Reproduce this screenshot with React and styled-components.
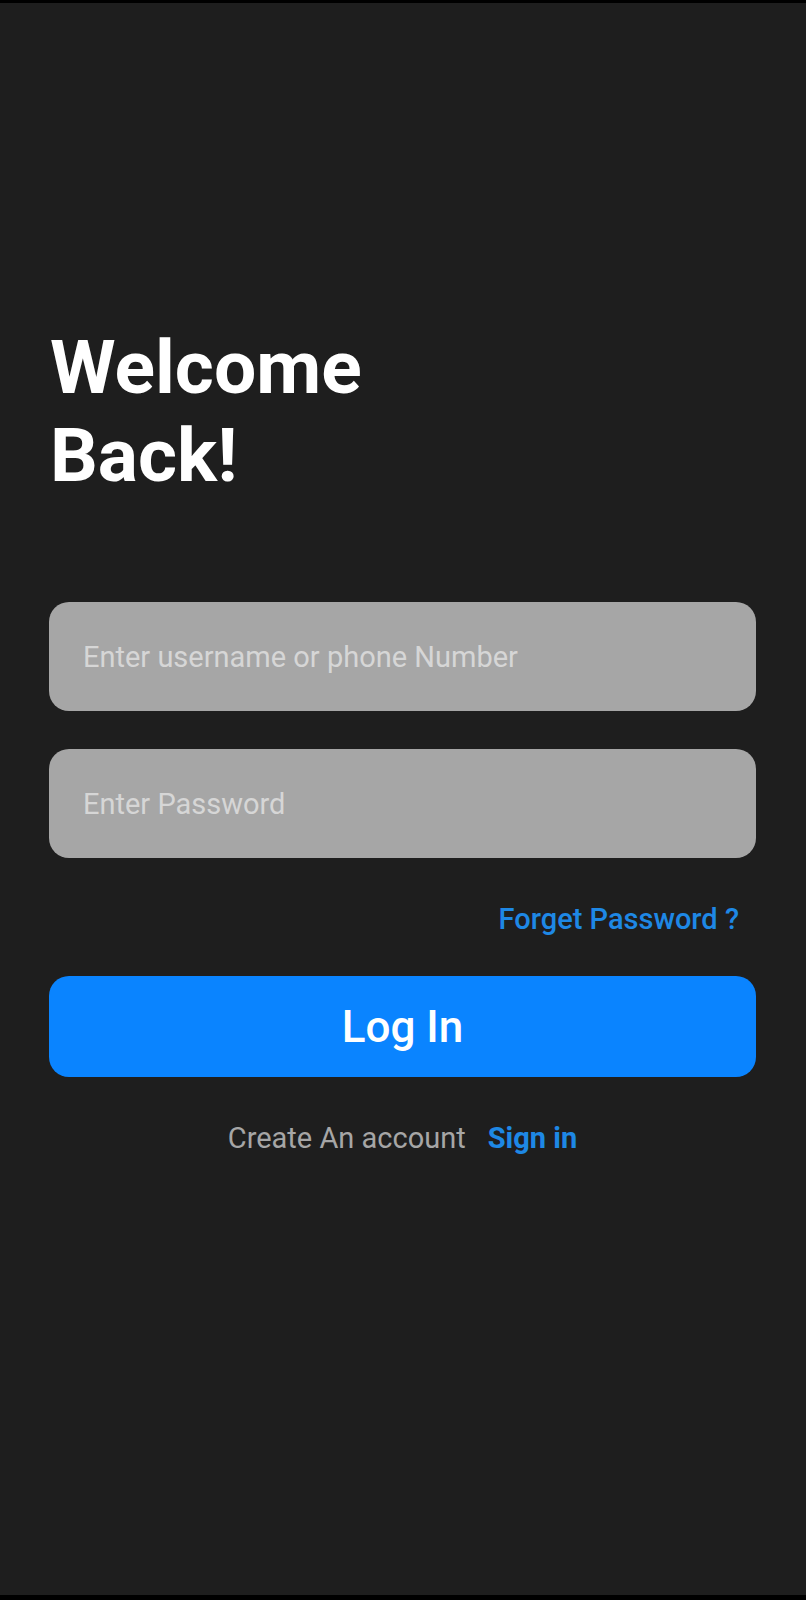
import React from "react";
import styled, { createGlobalStyle } from "styled-components";

const Global = createGlobalStyle`
  html, body { margin: 0; padding: 0; background: #000; }
  body { font-family: Roboto, "Noto Sans", sans-serif; }
  * { box-sizing: border-box; }
`;

const Screen = styled.div`
  margin-top: 3px;
  height: 1592px;
  background: #1e1e1e;
  padding: 320px 50px 0 49px;
  display: flex;
  flex-direction: column;
`;

const Title = styled.h1`
  margin: 0;
  padding-left: 1px;
  color: #ffffff;
  font-family: Roboto, sans-serif;
  font-weight: 700;
  font-size: 75px;
  line-height: 88px;
`;

const Form = styled.form`
  margin-top: 103px;
  display: flex;
  flex-direction: column;
  gap: 38px;
`;

const Field = styled.input`
  height: 109px;
  border: none;
  outline: none;
  border-radius: 20px;
  background: #a6a6a6;
  padding: 0 34px;
  font-family: Roboto, sans-serif;
  font-size: 29px;
  color: #ffffff;
  &::placeholder { color: #d6d6d6; }
`;

const Forgot = styled.a`
  align-self: flex-end;
  margin: 45px 17px 0 0;
  color: #1e88e5;
  font-family: Roboto, sans-serif;
  font-weight: 500;
  font-size: 29px;
  line-height: 33px;
  text-decoration: none;
`;

const LoginButton = styled.button`
  margin-top: 40px;
  height: 101px;
  border: none;
  border-radius: 20px;
  background: #0a84ff;
  color: #ffffff;
  font-family: Roboto, sans-serif;
  font-weight: 500;
  font-size: 44px;
`;

const Footer = styled.div`
  margin-top: 45px;
  display: flex;
  justify-content: center;
  gap: 22px;
  font-family: Roboto, sans-serif;
  font-size: 29px;
  line-height: 33px;
`;

const Muted = styled.span`
  color: #a6a6a6;
`;

const Link = styled.a`
  color: #1e88e5;
  font-weight: 700;
  text-decoration: none;
`;

export default function App() {
  return (
    <>
      <Global />
      <Screen>
        <Title>
          Welcome
          <br />
          Back!
        </Title>
        <Form onSubmit={(e) => e.preventDefault()}>
          <Field placeholder="Enter username or phone Number" />
          <Field type="password" placeholder="Enter Password" />
        </Form>
        <Forgot href="#">Forget Password ?</Forgot>
        <LoginButton>Log In</LoginButton>
        <Footer>
          <Muted>Create An account</Muted>
          <Link href="#">Sign in</Link>
        </Footer>
      </Screen>
    </>
  );
}
